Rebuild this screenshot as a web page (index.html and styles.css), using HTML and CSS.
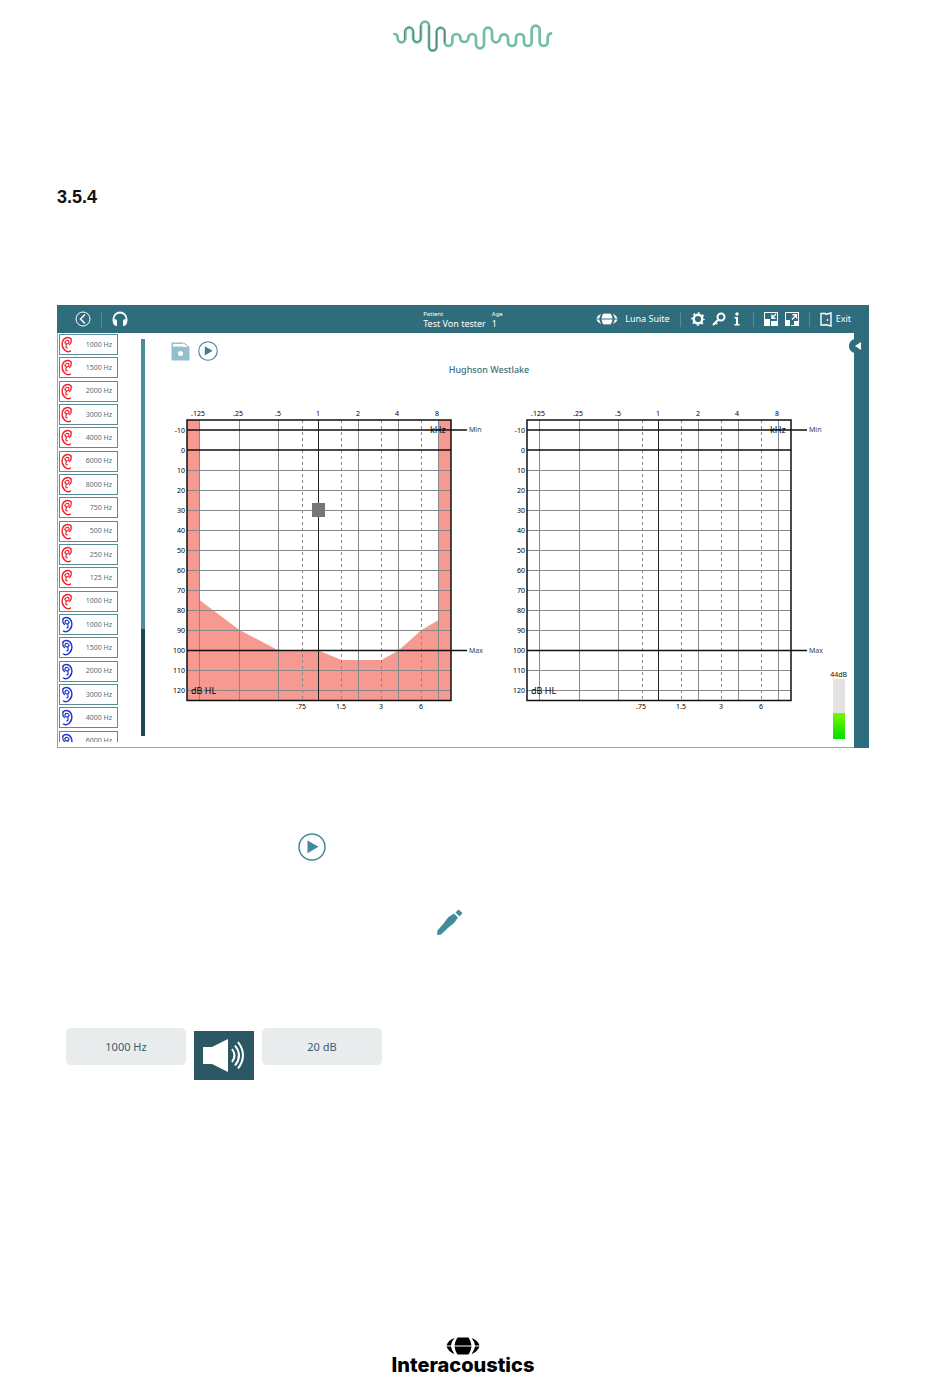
FILE: index.html
```html
<!DOCTYPE html>
<html lang="en">
<head>
<meta charset="utf-8">
<title>Hughson Westlake</title>
<link rel="stylesheet" href="styles.css">
</head>
<body>
<svg class="defs" width="0" height="0" aria-hidden="true">
  <defs>
    <symbol id="ear" viewBox="0 0 12 16">
      <g fill="none" stroke="currentColor" stroke-linecap="round">
        <path stroke-width="1.600" d="M10 2.500C8.500 .5 5 .3 2.800 2.800C.6 5.500.8 9.500 2.600 12.200C4 14.800 7 15.800 9.300 14.600"/>
        <path stroke-width="1.200" d="M10 2.800C10.600 5 10 6.800 8.600 8M3.800 6.200C4 3.800 7.200 3.200 8 5C8.400 6.600 7 7.600 5.800 7.200M4.200 6.200C5.200 7.200 5.600 8.200 5 9.600C4.600 10.800 5.200 11.500 6.200 11.200"/>
      </g>
    </symbol>
    <symbol id="play" viewBox="0 0 28 28">
      <circle cx="14" cy="14" r="13" fill="none" stroke="currentColor" stroke-width="1.500"/>
      <path d="M9.500 7.500L20.500 13.800L9.500 20.200Z" fill="currentColor"/>
    </symbol>
    <symbol id="globe" viewBox="0 0 34 18">
      <path d="M11.500 .5H22.500Q25 4 25.500 8.400H8.500Q9 4 11.500 .5ZM8.500 9.600H25.500Q25 14 22.500 17.500H11.500Q9 14 8.500 9.600ZM8.500 1Q5.500 4.500 5 8.400H.5Q2.500 3 8.500 1ZM25.500 1Q28.500 4.500 29 8.400H33.500Q31.500 3 25.500 1ZM8.500 17Q5.500 13.500 5 9.600H.5Q2.500 15 8.500 17ZM25.500 17Q28.500 13.500 29 9.600H33.500Q31.500 15 25.500 17Z" fill="currentColor"/>
    </symbol>
    <g id="grid" fill="none">
      <path stroke="#888" d="M22 65.500H286M22 85.500H286M22 105.500H286M22 125.500H286M22 145.500H286M22 165.500H286M22 185.500H286M22 205.500H286M22 225.500H286M22 265.500H286M22 285.500H286M34.500 15V295M74.500 15V295M113.500 15V295M193.500 15V295M233.500 15V295M273.500 15V295"/>
      <path stroke="#888" stroke-dasharray="3 3" d="M137.500 15V295M176.500 15V295M216.500 15V295M256.500 15V295"/>
      <path stroke="#222" d="M153.500 15V295"/>
      <path stroke="#111" stroke-width="1.500" d="M22 25H302M22 45H286M22 245.500H302"/>
      <path stroke="#111" stroke-width="1.500" d="M22 15H286V295.500H22Z"/>
    </g>
  </defs>
</svg>

<header class="brand-wave">
  <svg width="180" height="50" viewBox="0 0 540 150" role="img" aria-label="Sound wave" fill="none" stroke-linecap="round">
    <path stroke="#70bea1" stroke-width="8" d="M40 72Q50 72 50 85A11.500 12 0 0 0 73 85V65A11.500 12 0 0 1 96 65V85A12 12 0 0 0 120 85V47A12 12 0 0 1 144 47V110A11.500 12 0 0 0 167 110V65A12 12 0 0 1 191 65V96A11.500 12 0 0 0 214 96V84A12 12 0 0 1 238 84A12 12 0 0 0 262 84A11.500 12 0 0 1 285 84V103A12 12 0 0 0 309 103V65A12 12 0 0 1 333 65V85A12 12 0 0 0 357 85A12 12 0 0 1 381 85V96A12 12 0 0 0 405 96V84A12 12 0 0 1 429 84V96A11.500 12 0 0 0 452 96V59A12 12 0 0 1 476 59V96A12 12 0 0 0 500 96V84Q500 72 510 70"/>
    <path stroke="#35645a" stroke-width="2" d="M70 88V65A14 14 0 0 1 98 65V85A10 10 0 0 0 118 85V47M144 47V110A11 12 0 0 0 166 110V65A13 13 0 0 1 191 62V96"/>
  </svg>
</header>

<main class="page">
  <h1 class="section-number">3.5.4</h1>

  <section class="app" aria-label="Audiometry">
    <div class="topbar">
      <div class="group">
        <button class="icon-btn" aria-label="Back"><svg width="16" height="16" viewBox="0 0 16 16" fill="none" stroke="currentColor"><circle cx="8" cy="8" r="7"/><path stroke-width="1.500" d="M10 3.500L5.500 8L10 12.500"/></svg></button>
        <span class="sep"></span>
        <button class="icon-btn" aria-label="Headphones"><svg width="16" height="16" viewBox="0 0 16 16"><path d="M1.500 11V8A6.500 6.500 0 0 1 14.500 8V11" fill="none" stroke="currentColor" stroke-width="1.800"/><path d="M1 9Q5 7 5 10V15Q1 15 1 11ZM15 9Q11 7 11 10V15Q15 15 15 11Z" fill="currentColor"/></svg></button>
      </div>
      <dl class="patient">
        <div><dt>Patient</dt><dd>Test Von tester</dd></div>
        <div><dt>Age</dt><dd>1</dd></div>
      </dl>
      <div class="group right">
        <svg width="22" height="12" viewBox="0 0 34 18" aria-hidden="true"><use href="#globe"/></svg>
        <span class="suite">Luna Suite</span>
        <span class="sep"></span>
        <button class="icon-btn" aria-label="Settings"><svg width="14" height="14" viewBox="0 0 14 14" fill="none" stroke="currentColor"><circle cx="7" cy="7" r="4.300" stroke-width="2.400"/><circle cx="7" cy="7" r="6" stroke-width="1.600" stroke-dasharray="2 2.710" stroke-dashoffset="1"/></svg></button>
        <button class="icon-btn" aria-label="Key"><svg width="14" height="14" viewBox="0 0 14 14" fill="none" stroke="currentColor" stroke-width="2"><circle cx="9" cy="5" r="3.500"/><path d="M6.500 7.500L1 13M3 10L5 12"/></svg></button>
        <button class="icon-btn" aria-label="Information"><svg width="10" height="14" viewBox="0 0 10 14" fill="currentColor"><circle cx="4" cy="2" r="1.700"/><path d="M1.500 5H5V12H6.500V13.500H1.500V12H3V6.500H1.500Z"/></svg></button>
        <span class="sep"></span>
        <button class="icon-btn" aria-label="Shrink"><svg width="14" height="14" viewBox="0 0 14 14" fill="currentColor"><path d="M0 0H14V1H1V14H0ZM0 7H6V14H0ZM7 9H14V14H7ZM13 0H14V14H13Z"/><path fill="none" stroke="currentColor" stroke-width="1.400" d="M12 2L8 6M8 2.500V6.200H11.500"/></svg></button>
        <button class="icon-btn" aria-label="Enlarge"><svg width="14" height="14" viewBox="0 0 14 14" fill="currentColor"><path d="M0 0H14V1H1V14H0ZM0 8H5V14H0ZM6 13H14V14H6ZM9 9H14V14H9ZM13 0H14V14H13Z"/><path fill="none" stroke="currentColor" stroke-width="1.400" d="M7 7.500L11.500 3M7.500 2.800H11.500V6.500"/></svg></button>
        <span class="sep"></span>
        <button class="exit"><svg width="12" height="15" viewBox="0 0 12 15" fill="none" stroke="currentColor" aria-hidden="true"><path stroke-width="1.400" d="M6 1.500H1V13H6M5.500 2.500L11 1V14L5.500 12.500"/><path d="M7.500 7V9" stroke-width="1.300"/></svg>Exit</button>
      </div>
    </div>

    <div class="app-body">
      <div class="steps">
        <ul class="step-list">
          <li><button><svg><use href="#ear"/></svg>1000 Hz</button></li>
          <li><button><svg><use href="#ear"/></svg>1500 Hz</button></li>
          <li><button><svg><use href="#ear"/></svg>2000 Hz</button></li>
          <li><button><svg><use href="#ear"/></svg>3000 Hz</button></li>
          <li><button><svg><use href="#ear"/></svg>4000 Hz</button></li>
          <li><button><svg><use href="#ear"/></svg>6000 Hz</button></li>
          <li><button><svg><use href="#ear"/></svg>8000 Hz</button></li>
          <li><button><svg><use href="#ear"/></svg>750 Hz</button></li>
          <li><button><svg><use href="#ear"/></svg>500 Hz</button></li>
          <li><button><svg><use href="#ear"/></svg>250 Hz</button></li>
          <li><button><svg><use href="#ear"/></svg>125 Hz</button></li>
          <li><button><svg><use href="#ear"/></svg>1000 Hz</button></li>
          <li class="left"><button><svg><use href="#ear"/></svg>1000 Hz</button></li>
          <li class="left"><button><svg><use href="#ear"/></svg>1500 Hz</button></li>
          <li class="left"><button><svg><use href="#ear"/></svg>2000 Hz</button></li>
          <li class="left"><button><svg><use href="#ear"/></svg>3000 Hz</button></li>
          <li class="left"><button><svg><use href="#ear"/></svg>4000 Hz</button></li>
          <li class="left"><button><svg><use href="#ear"/></svg>6000 Hz</button></li>
        </ul>
      </div>
      <div class="scroll"><div class="thumb"></div></div>

      <div class="work">
        <div class="tools">
          <button class="icon-btn save" aria-label="Save"><svg width="19" height="19" viewBox="0 0 19 19"><path d="M.5.500H13L18.500 5V18.500H.5Z" fill="#95bfca"/><path d="M2 2H12V4.500H2ZM12 1V5H17Z" fill="#fff"/><circle cx="9.500" cy="11.500" r="2.500" fill="#fff"/></svg></button>
          <button class="icon-btn start" aria-label="Start"><svg width="20" height="20"><use href="#play"/></svg></button>
        </div>
        <h2 class="test-name">Hughson Westlake</h2>
        <div class="charts">
          <svg class="chart" viewBox="0 0 340 310" role="img" aria-label="Right ear audiogram">
            <path fill="#f69a91" d="M22 15H34.500V195L74.500 225L113.500 245.500H153.500L176.500 255H216.500L233.500 245.500L256.500 225L273.500 215V15H286V295H22Z"/>
            <use href="#grid"/>
            <path fill="#777" d="M147 98H160V112H147Z"/>
            <g class="freq"><text x="33" y="11">.125</text><text x="73" y="11">.25</text><text x="113" y="11">.5</text><text x="153" y="11">1</text><text x="193" y="11">2</text><text x="232" y="11">4</text><text x="272" y="11">8</text><text x="136" y="304">.75</text><text x="176" y="304">1.5</text><text x="216" y="304">3</text><text x="256" y="304">6</text></g>
            <g class="level"><text x="20" y="28">-10</text><text x="20" y="48">0</text><text x="20" y="68">10</text><text x="20" y="88">20</text><text x="20" y="108">30</text><text x="20" y="128">40</text><text x="20" y="148">50</text><text x="20" y="168">60</text><text x="20" y="188">70</text><text x="20" y="208">80</text><text x="20" y="228">90</text><text x="20" y="248">100</text><text x="20" y="268">110</text><text x="20" y="288">120</text></g>
            <g class="unit"><text x="265" y="28">kHz</text><text x="26" y="289">dB HL</text></g>
            <g class="limit"><text x="304" y="27">Min</text><text x="304" y="248">Max</text></g>
          </svg>
          <svg class="chart" viewBox="0 0 340 310" role="img" aria-label="Left ear audiogram">
            <use href="#grid"/>
            <g class="freq"><text x="33" y="11">.125</text><text x="73" y="11">.25</text><text x="113" y="11">.5</text><text x="153" y="11">1</text><text x="193" y="11">2</text><text x="232" y="11">4</text><text x="272" y="11">8</text><text x="136" y="304">.75</text><text x="176" y="304">1.5</text><text x="216" y="304">3</text><text x="256" y="304">6</text></g>
            <g class="level"><text x="20" y="28">-10</text><text x="20" y="48">0</text><text x="20" y="68">10</text><text x="20" y="88">20</text><text x="20" y="108">30</text><text x="20" y="128">40</text><text x="20" y="148">50</text><text x="20" y="168">60</text><text x="20" y="188">70</text><text x="20" y="208">80</text><text x="20" y="228">90</text><text x="20" y="248">100</text><text x="20" y="268">110</text><text x="20" y="288">120</text></g>
            <g class="unit"><text x="265" y="28">kHz</text><text x="26" y="289">dB HL</text></g>
            <g class="limit"><text x="304" y="27">Min</text><text x="304" y="248">Max</text></g>
          </svg>
        </div>
        <div class="meter"><span>44dB</span><div class="meter-track"><div class="meter-fill"></div></div></div>
      </div>

      <div class="drawer"><button class="drawer-tab" aria-label="Open panel"><svg width="8" height="10" viewBox="0 0 8 10"><path d="M1 5L7 1V9Z" fill="#fff"/></svg></button></div>
    </div>
  </section>

  <div class="inline-play"><svg width="28" height="28" role="img" aria-label="Start"><use href="#play"/></svg></div>
  <div class="inline-pencil"><svg width="28" height="28" viewBox="0 0 28 28" role="img" aria-label="Edit" fill="#438a9b"><path d="M1 26L1.500 21.500L8 14L12 8.500L18 4.500L22 8.500L18 14L13 18L5 25.500ZM19.500 3.500L22.500 .5L26.500 4L23.500 7.500Z"/></svg></div>

  <div class="manual">
    <button class="value">1000 Hz</button>
    <button class="speaker" aria-label="Present tone"><svg width="60" height="49" viewBox="0 0 60 49"><path fill="#fff" d="M9 16H18L34 8V41L18 33H9Z"/><g fill="none" stroke="#fff" stroke-width="2"><path d="M38 18Q43 24.500 38 31"/><path d="M41 14.500Q49 24.500 41 34.500"/><path d="M44 11Q54 24.500 44 37.500"/></g></svg></button>
    <button class="value">20 dB</button>
  </div>
</main>

<footer class="brand">
  <svg width="34" height="18" aria-hidden="true"><use href="#globe"/></svg>
  <span>Interacoustics</span>
</footer>
</body>
</html>
```
FILE: styles.css
```css
* { box-sizing: border-box; }
body {
  margin: 0;
  background: #fff;
  color: #111;
  font-family: "Noto Sans", "Open Sans", sans-serif;
}
button {
  margin: 0;
  padding: 0;
  border: 0;
  background: none;
  color: inherit;
  font: inherit;
}
svg { display: block; flex: none; }
.defs { position: absolute; }

.brand-wave {
  display: flex;
  justify-content: center;
  padding: 10px 8px 0 0;
}
.page { padding: 0 81px 0 57px; }
.section-number {
  margin: 127px 0 97px;
  font: bold 18px/21px "Liberation Sans", Arial, sans-serif;
}

/* Application window */
.app { background: #fff; }
.topbar {
  display: grid;
  grid-template-columns: 1fr auto 1fr;
  align-items: center;
  height: 28px;
  padding: 0 18px;
  background: #2f6d7c;
  color: #fff;
}
.group { display: flex; align-items: center; gap: 7px; }
.group.right { justify-content: flex-end; }
.sep { width: 1px; height: 15px; margin: 0 3px; background: #5a8c98; }
.suite, .exit { font-size: 9px; line-height: 14px; }
.exit { display: flex; align-items: center; gap: 4px; }
.patient { display: flex; gap: 6px; margin: 0; }
.patient dt { font-size: 6px; line-height: 8px; }
.patient dd { margin: 0; font-size: 9px; line-height: 11px; }

.app-body {
  display: flex;
  height: 415px;
  border-left: 1px solid #8fa9b0;
  border-bottom: 1px solid #8fa9b0;
}
.steps { flex: none; width: 60px; height: 409px; margin-left: 1px; overflow: hidden; }
.step-list {
  display: grid;
  grid-template-rows: repeat(18, 1fr);
  height: 420px;
  margin: 0;
  padding: 0;
  list-style: none;
}
.step-list li { padding: 1px 1px 1px 0; }
.step-list button {
  display: flex;
  align-items: center;
  justify-content: space-between;
  width: 100%;
  height: 21px;
  padding: 0 5px 0 1px;
  border: 1px solid #5b8a98;
  font-size: 7px;
  line-height: 10px;
  color: #4d6f7b;
}
.step-list svg { width: 12px; height: 17px; color: #f0222c; }
.step-list .left svg { color: #1f35c8; transform: scaleX(-1); }
.scroll { flex: none; width: 4px; margin: 6px 0 12px 22px; background: #4b8d9d; }
.thumb { height: 107px; margin-top: 290px; background: #1f4654; }

.work { position: relative; flex: 1; min-width: 0; padding: 8px 9px 0 20px; }
.tools { display: flex; align-items: center; gap: 8px; padding-left: 6px; }
.start { color: #3f7f91; }
.test-name {
  margin: 2px 12px 0 0;
  padding-right: 20px;
  color: #39707f;
  font-size: 9px;
  font-weight: 500;
  line-height: 14px;
  text-align: center;
}
.charts { display: grid; grid-template-columns: 1fr 1fr; margin-top: 28px; }
.chart { width: 100%; height: auto; font-size: 7px; }
.freq { text-anchor: middle; }
.level { text-anchor: end; }
.unit { font-size: 9px; }
.limit { fill: #444; }
.meter {
  position: absolute;
  right: 7px;
  bottom: 8px;
  display: flex;
  flex-direction: column;
  align-items: center;
  font-size: 7px;
  line-height: 9px;
}
.meter-track { display: flex; align-items: flex-end; width: 12px; height: 60px; background: #e4e2e2; }
.meter-fill { width: 100%; height: 26px; background: linear-gradient(#78f600, #00e000); }
.drawer { position: relative; flex: none; width: 15px; margin-bottom: -1px; background: #2f6d7c; }
.drawer-tab {
  position: absolute;
  top: 6px;
  left: -5px;
  padding: 2px 0 2px 5px;
  border-radius: 8px;
  background: #2f6d7c;
}

/* Inline controls below the window */
.inline-play { display: flex; margin: 85px 0 0 241px; color: #438a9b; }
.inline-pencil { display: flex; margin: 48px 0 0 379px; }
.manual { display: flex; gap: 8px; margin: 91px 0 0 9px; }
.value {
  width: 120px;
  height: 37px;
  border-radius: 5px;
  background: #e9ecec;
  color: #365f70;
  font-size: 11px;
}
.speaker { height: 49px; margin-top: 3px; background: #2a5965; }

.brand {
  display: flex;
  flex-direction: column;
  align-items: center;
  margin-top: 257px;
  padding-right: 24px;
  color: #000;
  font: 800 20px/20px "Inter", "Noto Sans", sans-serif;
}
```
